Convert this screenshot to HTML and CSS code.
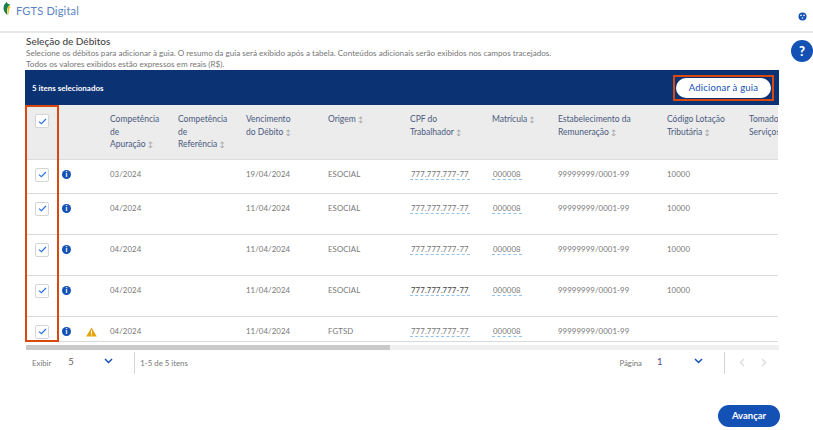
FILE: index.html
```html
<!DOCTYPE html>
<html lang="pt-BR">
<head>
  <meta charset="UTF-8" />
  <title>FGTS Digital</title>
  <link rel="stylesheet" href="styles.css">
</head>
<body>

  <!-- Cabeçalho -->
  <header class="topo">
    <div class="marca">
      <svg class="logo" width="8" height="14" viewBox="0 0 8 14">
        <path d="M3.5 0 L5 2 L7.5 2.5 L5.5 4.2 Q3 7 4.5 13 Q0.5 10 0.5 6 Q0.5 2.5 3.5 0 Z" fill="#14824a"/>
        <path d="M5.5 4.2 L7.5 4.6 L6.2 7 Q5.6 10 5.2 13.5 Q3.4 8 5.5 4.2 Z" fill="#f4b400"/>
      </svg>
      <span class="marca-nome">FGTS Digital</span>
    </div>
    <svg class="acesso" width="9" height="9" viewBox="0 0 9 9">
      <circle cx="4.5" cy="4.5" r="4" fill="#1351b4"/>
      <circle cx="3" cy="3.4" r="0.8" fill="#fff"/>
      <circle cx="6" cy="3.4" r="0.8" fill="#fff"/>
      <circle cx="4.5" cy="6" r="0.8" fill="#fff"/>
    </svg>
  </header>

  <button class="ajuda">?</button>

  <main class="contenido">
    <h1 class="titulo">Seleção de Débitos</h1>
    <p class="descricao">Selecione os débitos para adicionar à guia. O resumo da guia será exibido após a tabela. Conteúdos adicionais serão exibidos nos campos tracejados.</p>
    <p class="descricao">Todos os valores exibidos estão expressos em reais (R$).</p>

    <div class="barra">
      <span class="barra-texto">5 itens selecionados</span>
      <div class="destaque-btn">
        <button class="btn-adicionar">Adicionar à guia</button>
      </div>
    </div>

    <div class="tabela-wrap">
      <div class="destaque-coluna"></div>
      <table class="tabela">
        <colgroup>
          <col class="c-check"><col class="c-info"><col class="c-alerta"><col class="c-apur"><col class="c-ref"><col class="c-venc"><col class="c-orig"><col class="c-cpf"><col class="c-mat"><col class="c-estab"><col class="c-cod"><col class="c-tom">
        </colgroup>
        <thead>
          <tr>
            <th class="cel-check"><span class="check"><svg width="9" height="7" viewBox="0 0 9 7"><path d="M1 3.6 L3.4 5.6 L8 1" fill="none" stroke="#2670e8" stroke-width="1.2"/></svg></span></th>
            <th></th>
            <th></th>
            <th>Competência<br>de<br>Apuração <span class="orden">↕</span></th>
            <th>Competência<br>de<br>Referência <span class="orden">↕</span></th>
            <th>Vencimento<br>do Débito <span class="orden">↕</span></th>
            <th>Origem <span class="orden">↕</span></th>
            <th>CPF do<br>Trabalhador <span class="orden">↕</span></th>
            <th>Matrícula <span class="orden">↕</span></th>
            <th>Estabelecimento da<br>Remuneração <span class="orden">↕</span></th>
            <th>Código Lotação<br>Tributária <span class="orden">↕</span></th>
            <th>Tomador de<br>Serviços <span class="orden">↕</span></th>
          </tr>
        </thead>
        <tbody>
          <tr class="f1">
            <td class="cel-check"><span class="check"><svg width="9" height="7" viewBox="0 0 9 7"><path d="M1 3.6 L3.4 5.6 L8 1" fill="none" stroke="#2670e8" stroke-width="1.2"/></svg></span></td>
            <td class="cel-icono"><span class="info">i</span></td>
            <td></td>
            <td>03/2024</td><td></td><td>19/04/2024</td><td>ESOCIAL</td>
            <td><span class="tracejado">777.777.777-77</span></td>
            <td><span class="tracejado">000008</span></td>
            <td>99999999/0001-99</td><td>10000</td><td></td>
          </tr>
          <tr class="f2">
            <td class="cel-check"><span class="check"><svg width="9" height="7" viewBox="0 0 9 7"><path d="M1 3.6 L3.4 5.6 L8 1" fill="none" stroke="#2670e8" stroke-width="1.2"/></svg></span></td>
            <td class="cel-icono"><span class="info">i</span></td>
            <td></td>
            <td>04/2024</td><td></td><td>11/04/2024</td><td>ESOCIAL</td>
            <td><span class="tracejado">777.777.777-77</span></td>
            <td><span class="tracejado">000008</span></td>
            <td>99999999/0001-99</td><td>10000</td><td></td>
          </tr>
          <tr class="f2">
            <td class="cel-check"><span class="check"><svg width="9" height="7" viewBox="0 0 9 7"><path d="M1 3.6 L3.4 5.6 L8 1" fill="none" stroke="#2670e8" stroke-width="1.2"/></svg></span></td>
            <td class="cel-icono"><span class="info">i</span></td>
            <td></td>
            <td>04/2024</td><td></td><td>11/04/2024</td><td>ESOCIAL</td>
            <td><span class="tracejado">777.777.777-77</span></td>
            <td><span class="tracejado">000008</span></td>
            <td>99999999/0001-99</td><td>10000</td><td></td>
          </tr>
          <tr class="f2">
            <td class="cel-check"><span class="check"><svg width="9" height="7" viewBox="0 0 9 7"><path d="M1 3.6 L3.4 5.6 L8 1" fill="none" stroke="#2670e8" stroke-width="1.2"/></svg></span></td>
            <td class="cel-icono"><span class="info">i</span></td>
            <td></td>
            <td>04/2024</td><td></td><td>11/04/2024</td><td>ESOCIAL</td>
            <td><span class="tracejado forte">777.777.777-77</span></td>
            <td><span class="tracejado">000008</span></td>
            <td>99999999/0001-99</td><td>10000</td><td></td>
          </tr>
          <tr class="f5">
            <td class="cel-check"><span class="check"><svg width="9" height="7" viewBox="0 0 9 7"><path d="M1 3.6 L3.4 5.6 L8 1" fill="none" stroke="#2670e8" stroke-width="1.2"/></svg></span></td>
            <td class="cel-icono"><span class="info">i</span></td>
            <td class="cel-icono"><svg class="alerta" width="11" height="10" viewBox="0 0 11 10"><path d="M5.5 0.5 L10.8 9.6 L0.2 9.6 Z" fill="#e5a50a"/><rect x="5" y="3.4" width="1" height="3.4" fill="#fff"/><rect x="5" y="7.5" width="1" height="1" fill="#fff"/></svg></td>
            <td>04/2024</td><td></td><td>11/04/2024</td><td>FGTSD</td>
            <td><span class="tracejado">777.777.777-77</span></td>
            <td><span class="tracejado">000008</span></td>
            <td>99999999/0001-99</td><td></td><td></td>
          </tr>
        </tbody>
      </table>
    </div>

    <div class="rolagem"><div class="rolagem-barra"></div></div>

    <div class="paginacao">
      <div class="pag-grupo">
        <span class="pag-label">Exibir</span>
        <span class="pag-valor pag-exibir">5</span>
        <svg class="seta" width="9" height="6" viewBox="0 0 9 6"><path d="M1 1 L4.5 4.5 L8 1" fill="none" stroke="#1351b4" stroke-width="1.5"/></svg>
        <span class="divisor"></span>
        <span class="pag-label pag-itens">1-5 de 5 itens</span>
      </div>
      <div class="pag-grupo">
        <span class="pag-label">Página</span>
        <span class="pag-valor pag-pagina">1</span>
        <svg class="seta" width="9" height="6" viewBox="0 0 9 6"><path d="M1 1 L4.5 4.5 L8 1" fill="none" stroke="#1351b4" stroke-width="1.5"/></svg>
        <span class="divisor"></span>
        <svg class="nav" width="6" height="9" viewBox="0 0 6 9"><path d="M5 1 L1.5 4.5 L5 8" fill="none" stroke="#dcdcdc" stroke-width="1.4"/></svg>
        <svg class="nav nav-dir" width="6" height="9" viewBox="0 0 6 9"><path d="M1 1 L4.5 4.5 L1 8" fill="none" stroke="#dcdcdc" stroke-width="1.4"/></svg>
      </div>
    </div>

    <div class="acoes">
      <button class="btn-avancar">Avançar</button>
    </div>
  </main>

</body>
</html>
```

FILE: styles.css
```css
* {
  box-sizing: border-box;
}

body {
  margin: 0;
  font-family: 'Lato', 'Open Sans', sans-serif;
  background: #fff;
  color: #555;
  overflow: hidden;
  height: 430px;
}

.topo {
  height: 33px;
  padding: 0 6px 0 3px;
  display: flex;
  justify-content: space-between;
  border-bottom: 2px solid #e8e8e8;
}

.marca {
  display: flex;
  align-items: flex-start;
  gap: 5px;
}

.logo {
  margin-top: 2px;
}

.marca-nome {
  font-size: 11px;
  line-height: 12px;
  margin-top: 5px;
  color: #5b82c4;
  letter-spacing: 0.2px;
}

.acesso {
  margin-top: 12px;
}

.ajuda {
  position: absolute;
  top: 40px;
  left: 791px;
  width: 22px;
  height: 22px;
  padding: 0;
  border: none;
  border-radius: 50%;
  background: #1351b4;
  color: #fff;
  font-family: 'Lato', sans-serif;
  font-size: 13px;
  font-weight: 900;
}

.contenido {
  padding: 0 34px 0 25px;
}

.titulo {
  margin: 1px 0 0 1px;
  font-size: 10px;
  line-height: 14px;
  font-weight: 500;
  color: #444;
}

.descricao {
  margin: 0 0 0 1px;
  font-size: 8.15px;
  line-height: 11px;
  color: #777;
}

.barra {
  height: 35px;
  padding: 0 5px 0 7px;
  background: #0b3272;
  display: flex;
  justify-content: space-between;
  align-items: center;
}

.barra-texto {
  font-size: 8px;
  font-weight: 700;
  color: #fff;
}

.destaque-btn {
  border: 2px solid #d9480f;
  padding: 1px;
  height: 26px;
}

.btn-adicionar {
  display: block;
  width: 95px;
  height: 20px;
  padding: 0;
  border: none;
  border-radius: 10px;
  background: #fff;
  color: #1351b4;
  font-family: 'Lato', sans-serif;
  font-size: 9.5px;
  letter-spacing: 0.2px;
}

.tabela-wrap {
  position: relative;
  width: 753px;
  overflow: hidden;
}

/* recuadro naranja sobre la columna de selección */
.destaque-coluna {
  position: absolute;
  top: 0;
  left: 0;
  width: 34px;
  height: 237px;
  border: 2px solid #d9480f;
  pointer-events: none;
}

.tabela {
  border-collapse: collapse;
  table-layout: fixed;
  width: 824px;
  font-size: 7.8px;
}

.c-check { width: 34px; }
.c-info { width: 24px; }
.c-alerta { width: 27px; }
.c-apur { width: 68px; }
.c-ref { width: 68px; }
.c-venc { width: 82px; }
.c-orig { width: 82px; }
.c-cpf { width: 82px; }
.c-mat { width: 66px; }
.c-estab { width: 109px; }
.c-cod { width: 82px; }
.c-tom { width: 100px; }

.tabela th {
  height: 54px;
  padding: 8px 0 0;
  background: #ececec;
  border-bottom: 1px solid #dcdcdc;
  color: #4a5a80;
  font-size: 8.5px;
  font-weight: 400;
  text-align: left;
  vertical-align: top;
  line-height: 12.5px;
}

.tabela td {
  padding: 8px 0 0;
  border-bottom: 1px solid #d9d9d9;
  color: #777;
  vertical-align: top;
  line-height: 13px;
  letter-spacing: 0.1px;
}

.tabela th.cel-check {
  padding: 9px 0 0 10px;
}

.tabela td.cel-check {
  padding-left: 10px;
}

.tabela td.cel-icono {
  padding-left: 3px;
}

.f1 td { height: 34px; }
.f2 td { height: 41px; }
.f5 td { height: 25px; }

.orden {
  font-size: 7px;
  color: #999;
}

.check {
  display: flex;
  justify-content: center;
  align-items: center;
  width: 14px;
  height: 14px;
  background: #fff;
  border: 1px solid #d5d5d5;
  border-radius: 2px;
}

.info {
  display: inline-block;
  width: 9px;
  height: 9px;
  border-radius: 50%;
  background: #1351b4;
  color: #fff;
  font-size: 7px;
  font-weight: 900;
  line-height: 9px;
  text-align: center;
}

.alerta {
  vertical-align: middle;
}

.tracejado {
  padding: 0 1px;
  border-bottom: 1px dashed #8fc3ee;
}

.forte {
  color: #444;
}

.rolagem {
  margin: 3px 0 0 1px;
  height: 5px;
  width: 753px;
  background: #f0f0f0;
}

.rolagem-barra {
  width: 364px;
  height: 5px;
  background: #c9c9c9;
}

.paginacao {
  width: 754px;
  height: 24px;
  margin-top: 2px;
  padding-left: 7px;
  display: flex;
  justify-content: space-between;
  font-size: 7.8px;
  color: #777;
}

.pag-grupo {
  display: flex;
  align-items: center;
  height: 22px;
}

.pag-valor {
  font-size: 9.5px;
  color: #666;
  margin-top: -2px;
}

.pag-exibir {
  margin-left: 17px;
  width: 36px;
}

.pag-pagina {
  margin-left: 15px;
  width: 37px;
  color: #5a4a96;
}

.seta {
  margin-top: -3px;
}

.divisor {
  width: 1px;
  height: 22px;
  margin-left: 21px;
  background: #d5d5d5;
}

.pag-itens {
  margin-left: 5px;
}

.nav {
  margin-left: 14px;
}

.nav-dir {
  margin: 0 12px 0 16px;
}

.acoes {
  width: 755px;
  margin-top: 29px;
  display: flex;
  justify-content: flex-end;
}

.btn-avancar {
  width: 62px;
  height: 22px;
  padding: 0;
  border: none;
  border-radius: 11px;
  background: #1351b4;
  color: #fff;
  font-family: 'Lato', sans-serif;
  font-size: 9.5px;
  font-weight: 700;
}
```
